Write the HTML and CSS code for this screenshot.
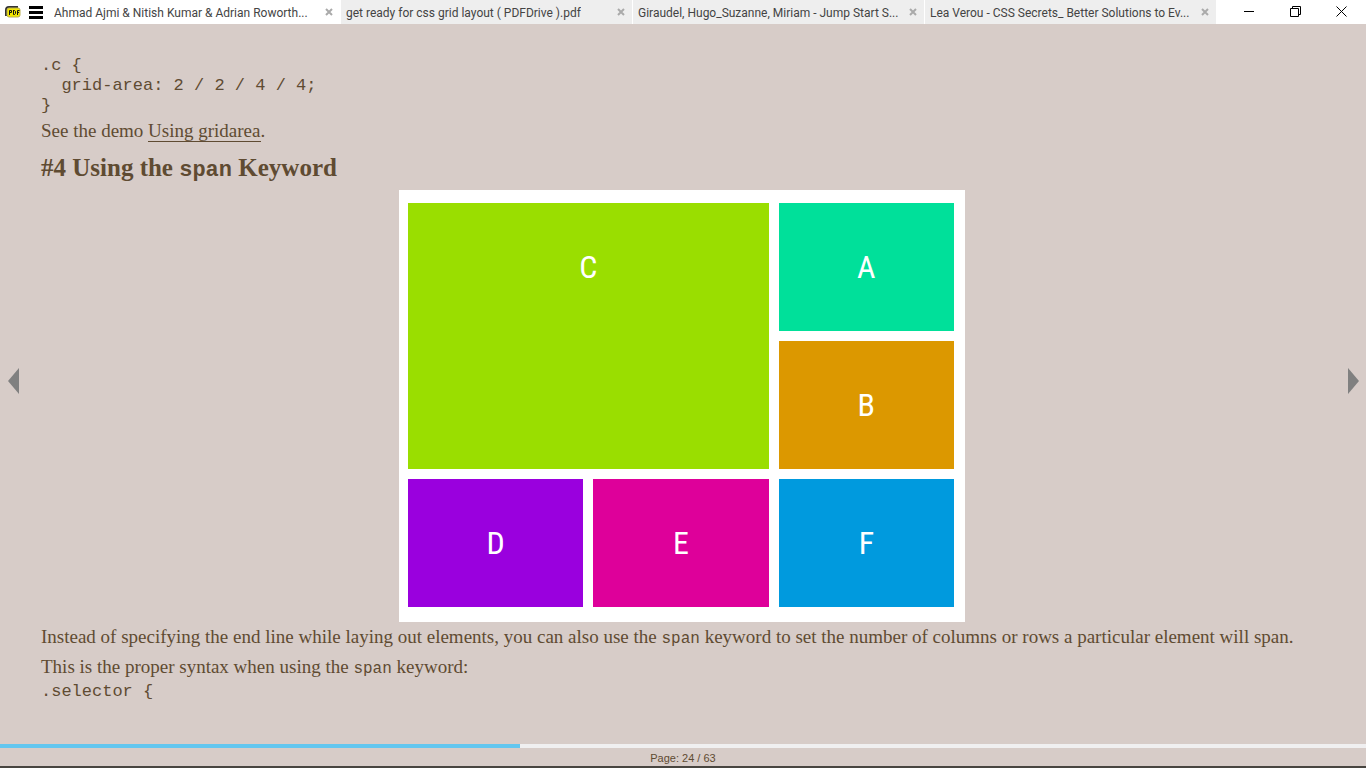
FILE: index.html
```
<!DOCTYPE html>
<html lang="en">
<head>
<meta charset="utf-8">
<title>get ready for css grid layout</title>
<link rel="stylesheet" href="styles.css">
</head>
<body>
<div class="reader">
  <header class="titlebar">
    <svg class="logo" viewBox="0 0 16 12" aria-hidden="true">
      <path d="M1 10V4Q1 1 4 1H13" fill="none" stroke="#333" stroke-width="2"/>
      <rect x="2" y="2" width="13" height="9" rx="2" fill="#f4e800" stroke="#b8ae50" stroke-width="1"/>
      <path d="M4.500 9V4.500H6.500V6.500H4.500M8.500 4V8.500H9.500L10.500 7.500V5.500L9.500 4.500H8.500M12.500 9V4.500H14.500M12.500 6.500H14" fill="none" stroke="#111" stroke-width="1"/>
    </svg>
    <button class="menu" type="button" aria-label="Menu"><svg viewBox="0 0 14 13"><path d="M0 1.500H14M0 6.500H14M0 11.500H14" stroke="#000" stroke-width="3"/></svg></button>
    <nav class="tabs" aria-label="Open documents">
      <div class="tab tab-active"><button class="tab-title" type="button">Ahmad Ajmi &amp; Nitish Kumar &amp; Adrian Roworth...</button><button class="tab-close" type="button" aria-label="Close tab"><svg viewBox="0 0 8 8"><path d="M1 1L7 7M7 1L1 7"/></svg></button></div>
      <div class="tab"><button class="tab-title" type="button">get ready for css grid layout ( PDFDrive ).pdf</button><button class="tab-close" type="button" aria-label="Close tab"><svg viewBox="0 0 8 8"><path d="M1 1L7 7M7 1L1 7"/></svg></button></div>
      <div class="tab"><button class="tab-title" type="button">Giraudel, Hugo_Suzanne, Miriam - Jump Start S...</button><button class="tab-close" type="button" aria-label="Close tab"><svg viewBox="0 0 8 8"><path d="M1 1L7 7M7 1L1 7"/></svg></button></div>
      <div class="tab"><button class="tab-title" type="button">Lea Verou - CSS Secrets_ Better Solutions to Ev...</button><button class="tab-close" type="button" aria-label="Close tab"><svg viewBox="0 0 8 8"><path d="M1 1L7 7M7 1L1 7"/></svg></button></div>
    </nav>
    <div class="window-controls">
      <button type="button" aria-label="Minimize"><svg viewBox="0 0 11 11"><path d="M0 5.500H10"/></svg></button>
      <button type="button" aria-label="Restore"><svg viewBox="0 0 11 11"><path d="M.5 2.500H8.500V10.500H.5ZM2.500 2.500V.5H10.500V8.500H8.500"/></svg></button>
      <button type="button" aria-label="Close"><svg viewBox="0 0 11 11"><path d="M.5 .5L10.500 10.500M10.500 .5L.5 10.500"/></svg></button>
    </div>
  </header>
  <div class="stage">
    <button class="pager" type="button" aria-label="Previous page"><svg viewBox="0 0 11 26"><path d="M0 13L11 0V26Z"/></svg></button>
    <main class="page">
<pre class="code">.c {
  grid-area: 2 / 2 / 4 / 4;
}</pre>
      <p>See the demo <a href="#demo">Using gridarea</a>.</p>
      <h1>#4 Using the <code>span</code> Keyword</h1>
      <figure class="demo" id="demo">
        <div class="tile tile-c">C</div>
        <div class="tile tile-a">A</div>
        <div class="tile tile-b">B</div>
        <div class="tile tile-d">D</div>
        <div class="tile tile-e">E</div>
        <div class="tile tile-f">F</div>
      </figure>
      <p>Instead of specifying the end line while laying out elements, you can also use the <code>span</code> keyword to set the number of columns or rows a particular element will span.</p>
      <p>This is the proper syntax when using the <code>span</code> keyword:</p>
<pre class="code">.selector {</pre>
    </main>
    <button class="pager" type="button" aria-label="Next page"><svg viewBox="0 0 11 26"><path d="M11 13L0 0V26Z"/></svg></button>
  </div>
  <progress class="progress" value="24" max="63" aria-label="Reading progress"></progress>
  <footer class="status">Page: 24 / 63</footer>
  <div class="taskbar-edge"></div>
</div>
</body>
</html>
```
FILE: styles.css
```
* { box-sizing: border-box; }

body {
  margin: 0;
  background: #d7ccc8;
  color: #5f4b32;
  font-family: "Liberation Serif", Georgia, serif;
}

button {
  padding: 0;
  border: 0;
  background: none;
  color: inherit;
  font: inherit;
}

svg { display: block; }

.reader {
  display: flex;
  flex-direction: column;
  min-height: 100vh;
}

/* Title bar */
.titlebar {
  display: flex;
  align-items: center;
  height: 24px;
  padding-left: 5px;
  background: #fff;
  color: #444;
  font: 12px/26px Roboto, "Noto Sans", sans-serif;
}

.logo { width: 16px; height: 12px; }
.menu { margin: 0 6px 0 8px; }
.menu svg { width: 14px; height: 13px; }

.tabs {
  display: flex;
  flex: 1;
  gap: 1px;
  min-width: 0;
}

.tab {
  display: flex;
  flex: 1;
  align-items: center;
  justify-content: space-between;
  height: 24px;
  min-width: 0;
  padding: 0 7px 0 5px;
  background: #eee;
}

.tab-active { background: #fff; }

.tab-title {
  overflow: hidden;
  padding-top: 2px;
  white-space: nowrap;
}

.tab-close svg {
  width: 8px;
  height: 8px;
  fill: none;
  stroke: #aaa;
  stroke-width: 2;
}

.window-controls {
  display: flex;
  align-self: flex-start;
  width: 150px;
  padding: 0 2px 0 11px;
}

.window-controls button {
  display: grid;
  flex: 1;
  place-items: center;
  height: 22px;
}

.window-controls svg {
  width: 11px;
  height: 11px;
  fill: none;
  stroke: #000;
}

/* Document */
.stage {
  display: flex;
  flex: 1;
  justify-content: space-between;
}

.pager { padding: 0 7px 6px 8px; }
.pager svg { width: 11px; height: 26px; fill: #808080; }

.page {
  flex: 1;
  min-width: 0;
  padding: 32px 17px 0 15px;
  font-size: 19px;
  line-height: 30px;
}

.page p { margin: 0; }

.page a {
  border-bottom: 1px solid;
  color: inherit;
  text-decoration: none;
}

.page h1 {
  margin: 3px 0;
  font-size: 25px;
  line-height: 38px;
}

.code {
  margin: 0;
  font: 17px/20px "Liberation Mono", "Courier New", monospace;
}

.page code {
  font-family: "Liberation Mono", "Courier New", monospace;
  font-size: 16px;
  line-height: 20px;
}

.page h1 code { font-size: 22px; }

.demo {
  display: grid;
  grid-template-columns: repeat(3, 1fr);
  grid-auto-rows: 128px;
  gap: 10px;
  max-width: 566px;
  margin: 0 auto;
  padding: 13px 11px 15px 9px;
  background: #fff;
}

.tile {
  color: #fff;
  font: 32px/128px "Roboto Condensed", "DejaVu Sans Condensed", sans-serif;
  text-align: center;
}

.tile-a { background: #00e09a; }
.tile-b { background: #dc9800; }
.tile-c { grid-area: 1 / 1 / span 2 / span 2; background: #9ade00; }
.tile-d { background: #9a00de; }
.tile-e { background: #de009a; }
.tile-f { background: #009ade; }

/* Bottom */
.progress {
  display: block;
  width: 100%;
  height: 4px;
  border: 0;
  background: #f0eff0;
  appearance: none;
}

.progress::-webkit-progress-bar { background: #f0eff0; }
.progress::-webkit-progress-value { background: #62c6ef; }

.status {
  height: 18px;
  font: 11px/20px "Liberation Sans", Arial, sans-serif;
  text-align: center;
}

.taskbar-edge { height: 2px; background: #484540; }
```
